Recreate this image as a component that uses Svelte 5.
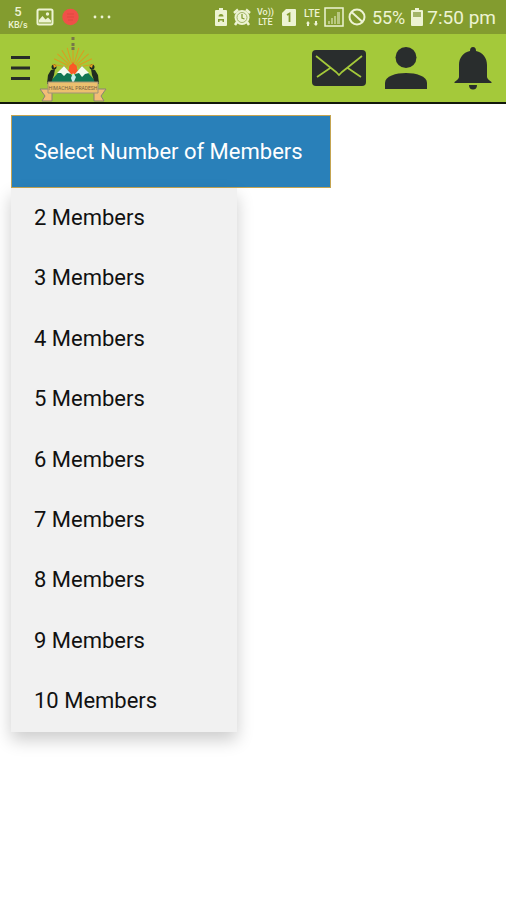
<script lang="ts">
    const counts = [2, 3, 4, 5, 6, 7, 8, 9, 10];
    const rays = [-80, -64, -48, -32, -16, 0, 16, 32, 48, 64, 80];

    let open = $state(true);
    let selected = $state<number | null>(null);

    function choose(count: number) {
        selected = count;
        open = false;
    }
</script>

<div class="page">
    <div class="status">
        <div class="group left">
            <span class="stack speed"><b>5</b><span>KB/s</span></span>
            <svg width="18" height="18" viewBox="0 0 18 18">
                <rect x="1.5" y="1.5" width="15" height="15" rx="1.5" fill="none" stroke="currentColor" stroke-width="2" />
                <path d="M3 14.5V12l3.5-4 3 3.5 2.5-2 3 3v2z" fill="currentColor" />
                <circle cx="11.5" cy="6" r="1.7" fill="currentColor" />
            </svg>
            <svg width="17" height="18" viewBox="0 0 17 18">
                <circle cx="8.5" cy="9" r="8.2" fill="#ef5048" />
                <path d="M5 6h7M5 9h7M6 12h5" stroke="#df4640" stroke-width="1" />
            </svg>
            <svg class="more" width="18" height="18" viewBox="0 0 18 18" fill="currentColor">
                <circle cx="2" cy="9" r="1.4" /><circle cx="9" cy="9" r="1.4" /><circle cx="16" cy="9" r="1.4" />
            </svg>
        </div>
        <div class="group right">
            <svg width="12" height="18" viewBox="0 0 12 18">
                <path d="M4 0h4v2h3a1 1 0 0 1 1 1v14a1 1 0 0 1-1 1H1a1 1 0 0 1-1-1V3a1 1 0 0 1 1-1h3z" fill="currentColor" />
                <path d="M3.5 8.5a2.5 2.5 0 0 1 5 0zM3 11h6v3H7.5v-1.5h-3V14H3z" fill="#839c2f" />
            </svg>
            <svg class="alarm" width="18" height="18" viewBox="0 0 18 18">
                <circle cx="9" cy="9.5" r="7.5" fill="currentColor" />
                <path d="M1 5l4-3.5M17 5l-4-3.5M4 14l-2 3M14 14l2 3" stroke="currentColor" stroke-width="2.5" />
                <circle cx="9" cy="9.5" r="5" fill="none" stroke="#a3b568" stroke-width="1" />
                <path d="M9 6v4l2.5 1" fill="none" stroke="#839c2f" stroke-width="1.3" />
            </svg>
            <span class="stack"><span>Vo))</span><span>LTE</span></span>
            <svg class="sim" width="14" height="17" viewBox="0 0 14 17">
                <path d="M4 0h9a1 1 0 0 1 1 1v15a1 1 0 0 1-1 1H1a1 1 0 0 1-1-1V4z" fill="currentColor" />
                <path d="M5 6l2.5-1.5V13" fill="none" stroke="#839c2f" stroke-width="1.8" />
            </svg>
            <span class="stack lte">
                <span>LTE</span>
                <svg width="12" height="5" viewBox="0 0 12 5" fill="currentColor">
                    <path d="M1 5V2.5H0L2 0l2 2.5H3V5zM9 0v2.5H7.5L10 5l2-2.5h-1V0z" />
                </svg>
            </span>
            <svg width="20" height="20" viewBox="0 0 20 20">
                <rect x="1" y="1" width="18" height="18" fill="none" stroke="currentColor" stroke-width="1.5" />
                <path d="M4 17v-3h2v3zM7 17v-6h2v6zM10 17V9h2v8zM13 17V5h3v12z" fill="currentColor" opacity=".5" />
            </svg>
            <svg width="18" height="18" viewBox="0 0 18 18" fill="none" stroke="currentColor" stroke-width="2">
                <circle cx="9" cy="9" r="7.5" /><path d="M3.5 4l11 10" />
            </svg>
            <span class="percent">55%</span>
            <svg width="12" height="18" viewBox="0 0 12 18">
                <path d="M4 0h4v2h3a1 1 0 0 1 1 1v14a1 1 0 0 1-1 1H1a1 1 0 0 1-1-1V3a1 1 0 0 1 1-1h3z" fill="currentColor" />
                <path d="M2 4h8v5H2z" fill="#a3b568" />
            </svg>
            <time>7:50 pm</time>
        </div>
    </div>

    <header>
        <button class="icon" aria-label="Menu">
            <svg width="20" height="26" viewBox="0 0 20 26" stroke="#272c28" stroke-width="3">
                <path d="M1 2.5h19M1 13h19M1 23.5h19" />
            </svg>
        </button>
        <a class="logo" href="#home" aria-label="Home">
            <svg width="68" height="66" viewBox="0 0 68 66">
                <g stroke="#dc9c20" stroke-width="1">
                    {#each rays as angle}
                        <path d="M34 27V11" transform="rotate({angle} 34 32)" />
                    {/each}
                </g>
                <path d="M34 1v4M34 7v8" stroke="#77764a" stroke-width="3" stroke-dasharray="3 1" />
                <path d="M34 26l7 12H27z" fill="#fb5926" />
                <circle cx="34" cy="32" r="4" fill="#fb5926" />
                <path d="M10 47l15-17 9 11 9-11 15 17z" fill="#117653" />
                <path d="M18 37l7-7 7 8-4-1-3 3-3-3zM36 38l7-8 7 7-4 1-3 3-3-4z" fill="#f2fbef" />
                <path d="M34 37l3 4-3 7-2-6z" fill="#c5eceb" />
                <g fill="#202c20">
                    <circle cx="15" cy="31" r="2.5" /><path d="M12 34l4-1-1 6-3 8-4 1 1-9z" />
                    <circle cx="53" cy="31" r="2.5" /><path d="M56 34l-4-1 1 6 3 8 4 1-1-9z" />
                </g>
                <path d="M14 28l4 2-3 2zM54 28l-4 2 3 2z" fill="#e8a620" />
                <path d="M1 53h12v12H3l3-5zM67 53H55v12h10l-3-5z" fill="#f3bd77" stroke="#8a8375" stroke-width="1" />
                <path d="M9 46h50v11H9z" fill="#ecc06f" stroke="#a29379" stroke-width="1" />
                <text x="34" y="54" text-anchor="middle">HIMACHAL PRADESH</text>
            </svg>
        </a>
        <nav>
            <button class="icon" aria-label="Messages">
                <svg width="54" height="38" viewBox="0 0 54 38">
                    <rect x="0" y="1" width="54" height="36" rx="4" fill="#292d2d" />
                    <path d="M4 7l20 16 3 3 3-3L50 7M5 28l14-9.5M49 28l-14-9.5" fill="none" stroke="#a4c93a" stroke-width="1.7" />
                </svg>
            </button>
            <button class="icon" aria-label="Profile">
                <svg width="44" height="44" viewBox="0 0 44 44" fill="#292d2d">
                    <circle cx="22" cy="11.5" r="10.5" />
                    <path d="M1 43V37c0-7 11-10 21-10s21 3 21 10v6z" />
                </svg>
            </button>
            <button class="icon bell" aria-label="Notifications">
                <svg width="38" height="44" viewBox="0 0 38 44" fill="#292d2d">
                    <path d="M19 1c2 0 3 1.5 3 4 7 1.5 11 7 11 14v12q0 2 4.5 5v1H.5v-1Q5 33 5 31V19C5 12 9 6.5 16 5c0-2.5 1-4 3-4z" />
                    <path d="M15 39h8c0 3-1.5 4.5-4 4.5S15 42 15 39z" />
                </svg>
            </button>
        </nav>
    </header>

    <main>
        <button class="toggle" aria-expanded={open} onclick={() => (open = !open)}>
            {selected ? `${selected} Members` : 'Select Number of Members'}
        </button>
        {#if open}
            <div class="menu">
                {#each counts as count}
                    <button onclick={() => choose(count)}>{count} Members</button>
                {/each}
            </div>
        {/if}
    </main>
</div>

<style>
    :global(body) {
        margin: 0;
        background: #fff;
        font-family: Roboto, "Liberation Sans", sans-serif;
    }

    .page {
        min-height: 100vh;
    }

    button {
        margin: 0;
        border: 0;
        font: inherit;
        cursor: pointer;
    }

    svg {
        display: block;
        flex: none;
    }

    .status {
        display: flex;
        justify-content: space-between;
        align-items: center;
        height: 34px;
        padding: 0 10px 0 8px;
        box-sizing: border-box;
        background: #839c2f;
        color: #edf3d3;
    }

    .group {
        display: flex;
        align-items: center;
    }

    .left {
        gap: 8px;
    }

    .more {
        margin-left: 6px;
    }

    .right {
        gap: 4px;
    }

    .stack {
        display: flex;
        flex-direction: column;
        align-items: center;
        font-size: 9px;
        line-height: 10px;
        font-weight: 500;
    }

    .speed {
        width: 20px;
    }

    .speed b {
        font-size: 13px;
        line-height: 16px;
        font-weight: 500;
    }

    .alarm {
        margin: 0 2px;
    }

    .sim {
        margin: 0 4px;
    }

    .lte {
        gap: 2px;
        font-size: 10px;
    }

    .percent {
        font-size: 18px;
    }

    time {
        font-size: 19px;
    }

    header {
        display: flex;
        align-items: center;
        height: 68px;
        padding: 0 14px 0 10px;
        border-bottom: 2px solid #11180a;
        background: #a4c93a;
    }

    .icon {
        padding: 0;
        background: none;
    }

    .percent,
    .percent + svg {
        margin-left: 2px;
    }

    .logo {
        margin: 2px 0 0 9px;
    }

    .logo text {
        font-size: 5px;
        fill: #765e3c;
    }

    nav {
        display: flex;
        align-items: center;
        gap: 18px;
        margin-left: auto;
    }

    .bell {
        margin-left: 8px;
    }

    main {
        padding: 11px;
    }

    .toggle {
        display: block;
        padding: 23px 27px 22px 22px;
        border: 1px solid #c4a451;
        background: #2980b9;
        color: #fff;
        font-size: 22px;
        line-height: 26px;
    }

    .menu {
        display: flex;
        flex-direction: column;
        width: 226px;
        background: #f1f1f1;
        box-shadow: 0 8px 16px rgba(0, 0, 0, 0.2);
    }

    .menu button {
        padding: 17px 23px;
        background: none;
        color: #111;
        font-size: 22px;
        line-height: 1.2;
        text-align: left;
    }

    .menu button:hover {
        background: #ddd;
    }
</style>
